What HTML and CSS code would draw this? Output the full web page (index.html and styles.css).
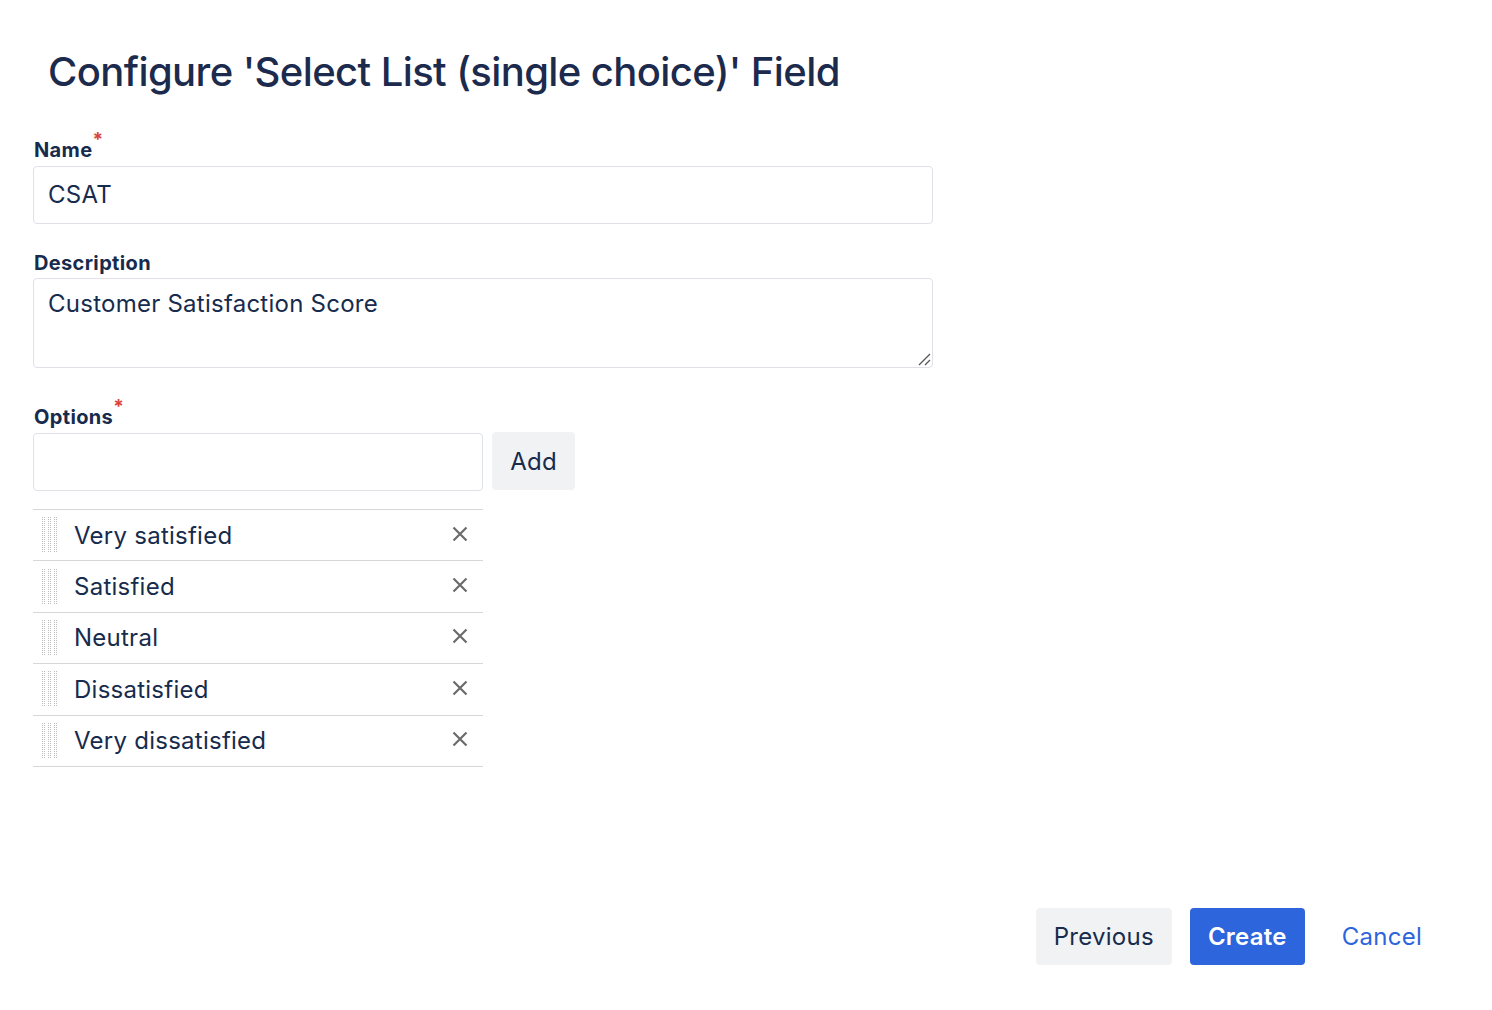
FILE: index.html
```html
<!DOCTYPE html>
<html>
<head>
<meta charset="utf-8">
<link rel="stylesheet" href="styles.css">
</head>
<body>
<div class="page">
  <h1 class="title">Configure 'Select List (single choice)' Field</h1>
  <div class="field first">
    <label class="label">Name<span class="req">*</span></label>
    <div class="input">CSAT</div>
  </div>
  <div class="field desc">
    <label class="label">Description</label>
    <div class="textarea">Customer Satisfaction Score
      <svg class="resize" width="14" height="14" viewBox="0 0 14 14"><path d="M2 13 L13 2 M8 13 L13 8" stroke="#555" stroke-width="1.3" fill="none"/></svg>
    </div>
  </div>
  <div class="field options">
    <label class="label">Options<span class="req">*</span></label>
    <div class="add-row">
      <div class="input small"></div>
      <button class="btn add">Add</button>
    </div>
    <svg width="0" height="0" class="defs">
      <defs>
        <pattern id="dots" width="2" height="2" patternUnits="userSpaceOnUse">
          <rect x="0" y="0" width="1" height="1" fill="#bdbdbd" shape-rendering="crispEdges"/>
        </pattern>
      </defs>
    </svg>
    <ul class="list">
      <li class="item"><svg class="handle" width="15" height="36" viewBox="0 0 15 36" shape-rendering="crispEdges"><rect x="0" y="0" width="4" height="36" fill="url(#dots)"/><rect x="6" y="0" width="4" height="36" fill="url(#dots)"/><rect x="12" y="0" width="4" height="36" fill="url(#dots)"/></svg><span class="text">Very satisfied</span><span class="x"><svg width="16" height="16" viewBox="0 0 16 16"><path d="M1.5 1.5 L14.5 14.5 M14.5 1.5 L1.5 14.5" stroke="#6b6b6b" stroke-width="2.2"/></svg></span></li>
      <li class="item"><svg class="handle" width="15" height="36" viewBox="0 0 15 36" shape-rendering="crispEdges"><rect x="0" y="0" width="4" height="36" fill="url(#dots)"/><rect x="6" y="0" width="4" height="36" fill="url(#dots)"/><rect x="12" y="0" width="4" height="36" fill="url(#dots)"/></svg><span class="text">Satisfied</span><span class="x"><svg width="16" height="16" viewBox="0 0 16 16"><path d="M1.5 1.5 L14.5 14.5 M14.5 1.5 L1.5 14.5" stroke="#6b6b6b" stroke-width="2.2"/></svg></span></li>
      <li class="item"><svg class="handle" width="15" height="36" viewBox="0 0 15 36" shape-rendering="crispEdges"><rect x="0" y="0" width="4" height="36" fill="url(#dots)"/><rect x="6" y="0" width="4" height="36" fill="url(#dots)"/><rect x="12" y="0" width="4" height="36" fill="url(#dots)"/></svg><span class="text">Neutral</span><span class="x"><svg width="16" height="16" viewBox="0 0 16 16"><path d="M1.5 1.5 L14.5 14.5 M14.5 1.5 L1.5 14.5" stroke="#6b6b6b" stroke-width="2.2"/></svg></span></li>
      <li class="item"><svg class="handle" width="15" height="36" viewBox="0 0 15 36" shape-rendering="crispEdges"><rect x="0" y="0" width="4" height="36" fill="url(#dots)"/><rect x="6" y="0" width="4" height="36" fill="url(#dots)"/><rect x="12" y="0" width="4" height="36" fill="url(#dots)"/></svg><span class="text">Dissatisfied</span><span class="x"><svg width="16" height="16" viewBox="0 0 16 16"><path d="M1.5 1.5 L14.5 14.5 M14.5 1.5 L1.5 14.5" stroke="#6b6b6b" stroke-width="2.2"/></svg></span></li>
      <li class="item"><svg class="handle" width="15" height="36" viewBox="0 0 15 36" shape-rendering="crispEdges"><rect x="0" y="0" width="4" height="36" fill="url(#dots)"/><rect x="6" y="0" width="4" height="36" fill="url(#dots)"/><rect x="12" y="0" width="4" height="36" fill="url(#dots)"/></svg><span class="text">Very dissatisfied</span><span class="x"><svg width="16" height="16" viewBox="0 0 16 16"><path d="M1.5 1.5 L14.5 14.5 M14.5 1.5 L1.5 14.5" stroke="#6b6b6b" stroke-width="2.2"/></svg></span></li>
    </ul>
  </div>
  <div class="footer">
    <button class="btn prev">Previous</button>
    <button class="btn create">Create</button>
    <a class="cancel">Cancel</a>
  </div>
</div>
</body>
</html>
```

FILE: styles.css
```css
* { box-sizing: border-box; }
html, body { margin: 0; padding: 0; background: #fff; }
body {
  font-family: Inter, "Noto Sans", "Liberation Sans", sans-serif;
  color: #172b4d;
  width: 1492px;
  height: 1010px;
  overflow: hidden;
}
.page {
  padding: 42px 0 0 33px;
  display: flex;
  flex-direction: column;
  height: 1010px;
}
.title {
  margin: 0 0 0 15px;
  font-size: 40px;
  font-weight: 500;
  line-height: 60px;
  letter-spacing: -0.6px;
  color: #1c2b4d;
}
.defs { position: absolute; }
.field { display: flex; flex-direction: column; width: 900px; }
.label {
  font-size: 20px;
  font-weight: 700;
  line-height: 26px;
  letter-spacing: 0.35px;
  margin-left: 1px;
  position: relative;
}
.first .label { margin-top: 35px; }
.desc .label { margin-top: 26px; }
.options .label { margin-top: 36px; }
.req {
  color: #d9453b;
  font-size: 19px;
  position: relative;
  top: -11px;
  left: 0px;
}
.input {
  height: 58px;
  border: 1px solid #dfe1e6;
  border-radius: 4px;
  font-size: 24px;
  letter-spacing: 0.25px;
  padding: 13px 14px;
  line-height: 30px;
  margin-top: 2px;
}
.textarea {
  height: 90px;
  border: 1px solid #dfe1e6;
  border-radius: 4px;
  font-size: 24px;
  letter-spacing: 0.25px;
  padding: 10px 14px;
  line-height: 30px;
  margin-top: 2px;
  position: relative;
}
.resize { position: absolute; right: 1px; bottom: 1px; }
.add-row { display: flex; gap: 9px; margin-top: 2px; }
.input.small { width: 450px; margin-top: 0; }
.btn {
  font-family: inherit;
  border: none;
  border-radius: 4px;
  font-size: 24px;
  letter-spacing: 0.25px;
  cursor: pointer;
}
.add {
  width: 83px;
  height: 58px;
  margin-top: -1px;
  background: #f1f2f4;
  color: #172b4d;
}
.list {
  list-style: none;
  margin: 18px 0 0 0;
  padding: 0;
  width: 450px;
  border-top: 1px solid #d5d7db;
}
.item {
  display: flex;
  align-items: center;
  height: 51.4px;
  border-bottom: 1px solid #d5d7db;
  font-size: 24px;
  letter-spacing: 0.25px;
}
.handle { margin-left: 9px; flex: none; }
.text { flex: 1; margin-left: 17px; }
.x { width: 16px; height: 16px; margin-right: 15px; display: flex; margin-top: -3px; }
.footer {
  margin-top: auto;
  margin-bottom: 45px;
  display: flex;
  align-items: center;
  justify-content: flex-end;
  padding-right: 70px;
}
.prev {
  width: 136px;
  height: 57px;
  background: #f1f2f4;
  color: #172b4d;
}
.create {
  width: 115px;
  height: 57px;
  margin-left: 18px;
  background: #2c65dc;
  color: #fff;
  font-weight: 600;
}
.cancel {
  margin-left: 37px;
  font-size: 24px;
  letter-spacing: 0.25px;
  color: #2c65dc;
}
```
